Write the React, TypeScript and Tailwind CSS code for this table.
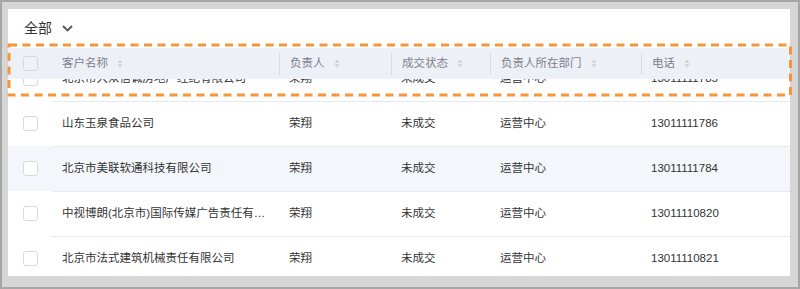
import React from "react";

const rows = [
  { name: "北京市大众信诚房地产经纪有限公司", owner: "荣翔", status: "未成交", dept: "运营中心", phone: "13011111785" },
  { name: "山东玉泉食品公司", owner: "荣翔", status: "未成交", dept: "运营中心", phone: "13011111786" },
  { name: "北京市美联软通科技有限公司", owner: "荣翔", status: "未成交", dept: "运营中心", phone: "13011111784", hl: true },
  { name: "中视博朗(北京市)国际传媒广告责任有限公司", owner: "荣翔", status: "未成交", dept: "运营中心", phone: "13011110820" },
  { name: "北京市法式建筑机械责任有限公司", owner: "荣翔", status: "未成交", dept: "运营中心", phone: "13011110821" },
];

function Box() {
  return <div className="w-[15px] h-[15px] rounded-[3px] border border-[#d9d9d9] bg-white" />;
}

function Sort() {
  return (
    <svg width="6" height="9" viewBox="0 0 6 9" className="ml-[9px]">
      <path d="M3 0.5 L5.5 3.8 L0.5 3.8 Z" fill="#cfd1d8" />
      <path d="M3 8.5 L5.5 5.2 L0.5 5.2 Z" fill="#cfd1d8" />
    </svg>
  );
}

const font = { fontFamily: '"Liberation Sans", "Noto Sans CJK SC", sans-serif' };

export default function App() {
  return (
    <div
      className="relative w-[800px] h-[289px] border-2 border-[#a6a6a6] bg-[#d6d6d6] pt-[7px] pl-[6px] overflow-hidden"
      style={font}
    >
      <div className="relative w-[782px] h-[267px] bg-white overflow-hidden">
        <div className="h-[38px] flex items-center pl-[16px] text-[14px] text-[#333]">
          <span>全部</span>
          <svg width="11" height="7" viewBox="0 0 11 7" className="ml-[10px] mt-[1px]">
            <path d="M1 1 L5.5 5.5 L10 1" stroke="#555" strokeWidth="1.8" fill="none" />
          </svg>
        </div>
        <div className="mt-[9px]">
          {rows.map((r, i) => (
            <div
              key={i}
              className={`flex h-[45px] items-center text-[11.5px] text-[#333] ${r.hl ? "bg-[#f3f7fc]" : ""}`}
            >
              <div className="w-[44px] h-full flex items-center justify-center pl-[1px]">
                <Box />
              </div>
              <div className={`flex flex-1 h-full items-center ${i > 0 ? "border-t border-[#e9e9e9]" : ""}`}>
                <div className="w-[227px] pl-[10px] pr-[12px] truncate">{r.name}</div>
                <div className="w-[112px] pl-[10px]">{r.owner}</div>
                <div className="w-[99px] pl-[10px]">{r.status}</div>
                <div className="w-[151px] pl-[10px]">{r.dept}</div>
                <div className="flex-1 pl-[10px]">{r.phone}</div>
              </div>
            </div>
          ))}
        </div>
        <div className="absolute left-0 right-0 top-[39px] h-[31px] bg-[#eef0f7] flex items-center text-[11.5px] text-[#7d808c]">
          <div className="w-[44px] flex items-center justify-center pl-[1px]">
            <div className="w-[15px] h-[15px] rounded-[3px] border border-[#d6d8de] bg-[#f1f2f7]" />
          </div>
          <div className="w-[227px] pl-[10px] flex items-center">客户名称<Sort /></div>
          <div className="w-[112px] pl-[10px] flex items-center border-l border-[#d9dbe2] h-[22px]">负责人<Sort /></div>
          <div className="w-[99px] pl-[10px] flex items-center border-l border-[#d9dbe2] h-[22px]">成交状态<Sort /></div>
          <div className="w-[151px] pl-[10px] flex items-center border-l border-[#d9dbe2] h-[22px]">负责人所在部门<Sort /></div>
          <div className="flex-1 pl-[10px] flex items-center border-l border-[#d9dbe2] h-[22px]">电话<Sort /></div>
        </div>
      </div>
      <svg className="absolute -left-[2px] -top-[2px] pointer-events-none" width="800" height="289">
        <rect x="9" y="45" width="781.5" height="50" fill="none" stroke="#f6963a" strokeWidth="3" strokeDasharray="8 5.5" />
      </svg>
    </div>
  );
}
